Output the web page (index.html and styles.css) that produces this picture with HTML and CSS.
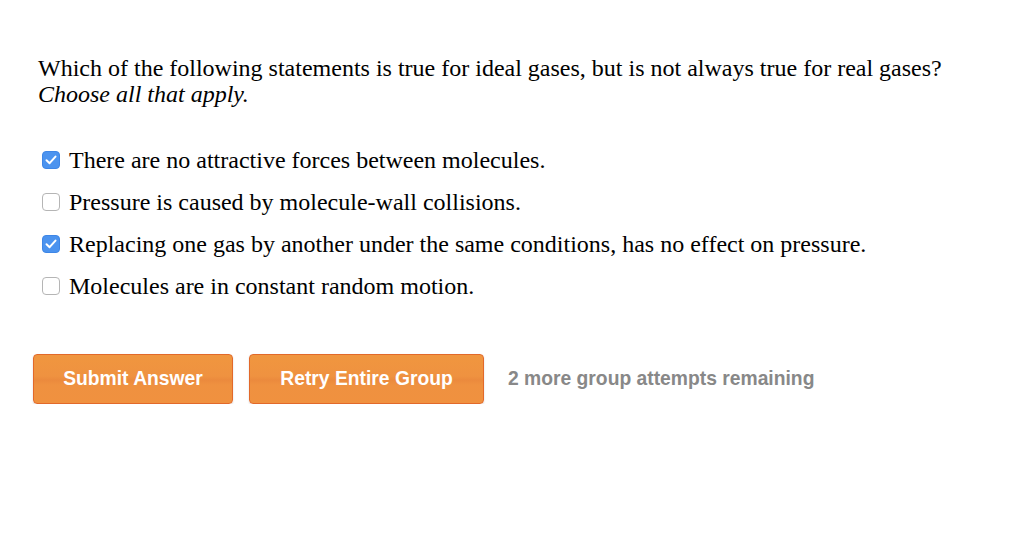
FILE: index.html
```html
<!DOCTYPE html>
<html lang="en">
  <head>
    <meta charset="UTF-8" />
    <title>Question</title>
    <link rel="stylesheet" href="styles.css">
  </head>
  <body>
    <div class="question">
      <p class="prompt">
        Which of the following statements is true for ideal gases, but is not always true for real gases?<br />
        <em>Choose all that apply.</em>
      </p>
      <div class="choices">
        <label class="choice">
          <span class="box checked">
            <svg viewBox="0 0 18 18" width="18" height="18"><path d="M4.5 9.2 L7.6 12.2 L13.5 5.6" fill="none" stroke="#fff" stroke-width="2" stroke-linecap="round" stroke-linejoin="round"/></svg>
          </span>
          There are no attractive forces between molecules.
        </label>
        <label class="choice">
          <span class="box"></span>
          Pressure is caused by molecule-wall collisions.
        </label>
        <label class="choice">
          <span class="box checked">
            <svg viewBox="0 0 18 18" width="18" height="18"><path d="M4.5 9.2 L7.6 12.2 L13.5 5.6" fill="none" stroke="#fff" stroke-width="2" stroke-linecap="round" stroke-linejoin="round"/></svg>
          </span>
          Replacing one gas by another under the same conditions, has no effect on pressure.
        </label>
        <label class="choice">
          <span class="box"></span>
          Molecules are in constant random motion.
        </label>
      </div>
      <div class="actions">
        <button class="btn submit">Submit Answer</button>
        <button class="btn retry">Retry Entire Group</button>
        <span class="remaining">2 more group attempts remaining</span>
      </div>
    </div>
  </body>
</html>
```

FILE: styles.css
```css
body {
  margin: 0;
  background: #fff;
  font-family: "Liberation Serif", "Times New Roman", serif;
  color: #000;
}
.question {
  padding: 55px 0 0 38px;
}
.prompt {
  margin: 0;
  font-size: 24px;
  line-height: 26px;
}
.choices {
  margin-top: 40px;
  display: flex;
  flex-direction: column;
  gap: 16px;
}
.choice {
  display: flex;
  align-items: center;
  font-size: 24px;
  line-height: 26px;
}
.box {
  width: 16px;
  height: 16px;
  margin: 0 9px 0 4px;
  border: 1px solid #b5b5b5;
  border-radius: 4px;
  background: #fff;
  position: relative;
  flex: none;
}
.box.checked {
  background: #4b93ef;
  border-color: #3e86e6;
}
.box svg {
  position: absolute;
  left: -1px;
  top: -1px;
}
.actions {
  margin: 55px 0 0 -5px;
  display: flex;
  align-items: center;
  gap: 16px;
}
.btn {
  height: 50px;
  border: 1px solid #e2692a;
  border-radius: 4px;
  background: linear-gradient(#f0963f 0%, #ef9240 44%, #eb8a3d 52%, #ef9140 62%, #f0913f 100%);
  color: #fff;
  font-family: "Liberation Sans", Arial, sans-serif;
  font-weight: bold;
  font-size: 19.3px;
  box-shadow: 0 1px 2px rgba(0, 0, 0, 0.15);
  cursor: pointer;
}
.submit {
  width: 200px;
}
.retry {
  width: 235px;
}
.remaining {
  margin-left: 8px;
  color: #888;
  font-family: "Liberation Sans", Arial, sans-serif;
  font-weight: bold;
  font-size: 19.3px;
}
```
